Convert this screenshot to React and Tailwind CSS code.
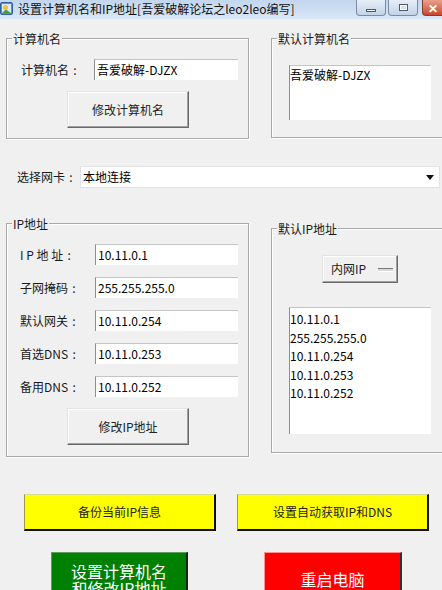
import React from "react";

const FONT = "font-['Noto_Sans_CJK_SC','Microsoft_YaHei',sans-serif]";

function Group({ title, className = "", children }) {
  return (
    <div className={`border border-[#a9a9a9] shadow-[inset_1px_1px_0_#ffffff,1px_1px_0_#ffffff] ${className}`}>
      <span className="block w-fit -mt-[8px] ml-[5px] px-[1px] bg-[#f0f0f0] text-[12px] leading-[16px] text-[#1a1a1a]">
        {title}
      </span>
      {children}
    </div>
  );
}

// fullwidth colon drawn centred in its cell, as the Windows font does
function Label({ text, className = "" }) {
  return (
    <span className={`whitespace-pre ${className}`}>
      {text}
      <span className="inline-block w-[12px] text-center">:</span>
    </span>
  );
}

function Field({ value, className = "" }) {
  return (
    <div
      className={`bg-white border-l border-t border-l-[#8e8e8e] border-t-[#c4c4c4] pl-[2px] text-[12px] leading-[20px] text-black ${className}`}
    >
      {value}
    </div>
  );
}

function GrayButton({ children, className = "" }) {
  return (
    <button
      className={`flex items-center justify-center bg-[#f0f0f0] border border-t-[#e3e3e3] border-l-[#e3e3e3] border-r-[#696969] border-b-[#696969] shadow-[inset_-1px_-1px_0_#a0a0a0,inset_1px_1px_0_#ffffff] text-[12px] text-[#222] ${className}`}
    >
      {children}
    </button>
  );
}

function TitleBar() {
  return (
    <div className="h-[19px] flex items-start bg-gradient-to-b from-[#c2d6ee] to-[#d9e6f5]">
      <svg width="13" height="14" viewBox="0 0 13 14" className="mt-[2px] shrink-0">
        <rect x="0.5" y="0.5" width="12" height="12" rx="1.5" fill="#5b8fd0" stroke="#2f5f9e" />
        <rect x="2" y="2" width="9" height="9" fill="#dbe9f8" />
        <circle cx="5.5" cy="5.5" r="2.5" fill="#f2c230" />
        <path d="M2 11 L6 7.5 L11 11 Z" fill="#4a9a3a" />
      </svg>
      <span className="ml-[5px] text-[12px] leading-[18px] text-[#111] whitespace-nowrap">
        设置计算机名和IP地址[吾爱破解论坛之leo2leo编写]
      </span>
      <div className="ml-auto flex items-start">
        <div className="w-[30px] h-[16px] rounded-b-[4px] border border-t-0 border-[#7a8ba3] bg-gradient-to-b from-[#e6eef8] to-[#c3d3e8] flex items-end justify-center pb-[3px]">
          <span className="block w-[10px] h-[3px] bg-white border border-[#4a5a70]" />
        </div>
        <div className="ml-[2px] w-[30px] h-[16px] rounded-b-[4px] border border-t-0 border-[#7a8ba3] bg-gradient-to-b from-[#e6eef8] to-[#c3d3e8] flex items-center justify-center">
          <span className="block w-[9px] h-[7px] border border-[#4a5a70] shadow-[inset_0_0_0_1px_#ffffff]" />
        </div>
        <div className="ml-[4px] w-[20px] h-[16px] rounded-bl-[4px] border border-t-0 border-r-0 border-[#8a3a2a] bg-gradient-to-b from-[#e8a08c] to-[#c8452c] flex items-center pl-[5px] text-white text-[12px] leading-none font-bold">
          ✕
        </div>
      </div>
    </div>
  );
}

export default function App() {
  const rows = [
    ["I P 地 址", "10.11.0.1"],
    ["子网掩码", "255.255.255.0"],
    ["默认网关", "10.11.0.254"],
    ["首选DNS", "10.11.0.253"],
    ["备用DNS", "10.11.0.252"],
  ];
  const defaults = ["10.11.0.1", "255.255.255.0", "10.11.0.254", "10.11.0.253", "10.11.0.252"];

  return (
    <div className={`w-[442px] h-[590px] overflow-hidden bg-[#f0f0f0] ${FONT} text-[12px] text-[#1a1a1a]`}>
      <TitleBar />

      {/* computer name row */}
      <div className="flex items-start mt-[19px]">
        <Group title="计算机名" className="ml-[6px] w-[243px] h-[101px] shrink-0">
          <div className="flex items-center mt-[12px] pl-[14px]">
            <Label text="计算机名" className="w-[73px] leading-[21px]" />
            <Field value="吾爱破解-DJZX" className="w-[144px] h-[21px]" />
          </div>
          <GrayButton className="mt-[11px] ml-[60px] w-[122px] h-[37px]">修改计算机名</GrayButton>
        </Group>
        <Group title="默认计算机名" className="ml-[22px] w-[180px] h-[100px] shrink-0">
          <div className="mt-[18px] ml-[17px] w-[142px] h-[55px] bg-white border-l border-t border-l-[#8e8e8e] border-t-[#c4c4c4] pt-[1px] leading-[16px] text-black">
            吾爱破解-DJZX
          </div>
        </Group>
      </div>

      {/* adapter select */}
      <div className="flex items-center mt-[27px]">
        <Label text="选择网卡" className="ml-[17px] w-[63px] leading-[22px]" />
        <div className="w-[360px] h-[22px] bg-white border border-[#e2e2e2] flex items-center pl-[2px] text-black">
          <span>本地连接</span>
          <svg width="8" height="5" viewBox="0 0 8 5" className="ml-auto mr-[5px]">
            <path d="M0 0 H8 L4 5 Z" fill="#111" />
          </svg>
        </div>
      </div>

      {/* ip row */}
      <div className="flex items-start mt-[35px]">
        <Group title="IP地址" className="ml-[6px] w-[243px] h-[234px] shrink-0">
          <div className="mt-[12px] flex flex-col gap-[12px] pl-[13px]">
            {rows.map(([label, value]) => (
              <div key={label} className="flex items-center">
                <Label text={label} className="w-[75px] leading-[21px]" />
                <Field value={value} className="w-[143px] h-[21px]" />
              </div>
            ))}
          </div>
          <GrayButton className="mt-[11px] ml-[60px] w-[122px] h-[37px]">修改IP地址</GrayButton>
        </Group>
        <Group title="默认IP地址" className="ml-[22px] mt-[5px] w-[180px] h-[225px] shrink-0">
          <GrayButton className="mt-[18px] ml-[50px] w-[76px] h-[28px] gap-[12px] pl-[4px]">
            <span>内网IP</span>
            <span className="block w-[15px] h-[3px] border-t border-[#7a7a7a] bg-[#d8d8d8] shadow-[0_1px_0_#ffffff]" />
          </GrayButton>
          <div className="mt-[24px] ml-[17px] w-[142px] h-[127px] bg-white border-l border-t border-l-[#8e8e8e] border-t-[#c4c4c4] pt-[2px] text-black">
            {defaults.map((d) => (
              <div key={d} className="leading-[18.5px]">
                {d}
              </div>
            ))}
          </div>
        </Group>
      </div>

      {/* yellow buttons */}
      <div className="flex mt-[37px] ml-[24px] gap-[21px]">
        <button className="w-[192px] h-[37px] bg-[#ffff00] border-l border-t border-l-[#9a9a50] border-t-[#d8d890] border-r-2 border-b-2 border-r-[#101010] border-b-[#101010] text-[12px] text-[#222]">
          备份当前IP信息
        </button>
        <button className="w-[192px] h-[37px] bg-[#ffff00] border-l border-t border-l-[#9a9a50] border-t-[#d8d890] border-r-2 border-b-2 border-r-[#101010] border-b-[#101010] text-[12px] text-[#222]">
          设置自动获取IP和DNS
        </button>
      </div>

      {/* action buttons */}
      <div className="flex mt-[21px]">
        <button className="ml-[51px] w-[137px] h-[54px] shrink-0 bg-[#008000] border-l border-t border-l-[#5aa05a] border-t-[#5aa05a] border-r-2 border-r-[#202020] text-white text-[16px] leading-[17px] flex flex-col items-center justify-center">
          <span>设置计算机名</span>
          <span>和修改IP地址</span>
        </button>
        <button className="ml-[76px] w-[138px] h-[54px] shrink-0 bg-[#ff0000] border-l border-t border-l-[#ff9090] border-t-[#ff9090] border-r-2 border-r-[#303030] text-white text-[16px] leading-[17px] flex items-center justify-center">
          重启电脑
        </button>
      </div>
    </div>
  );
}
